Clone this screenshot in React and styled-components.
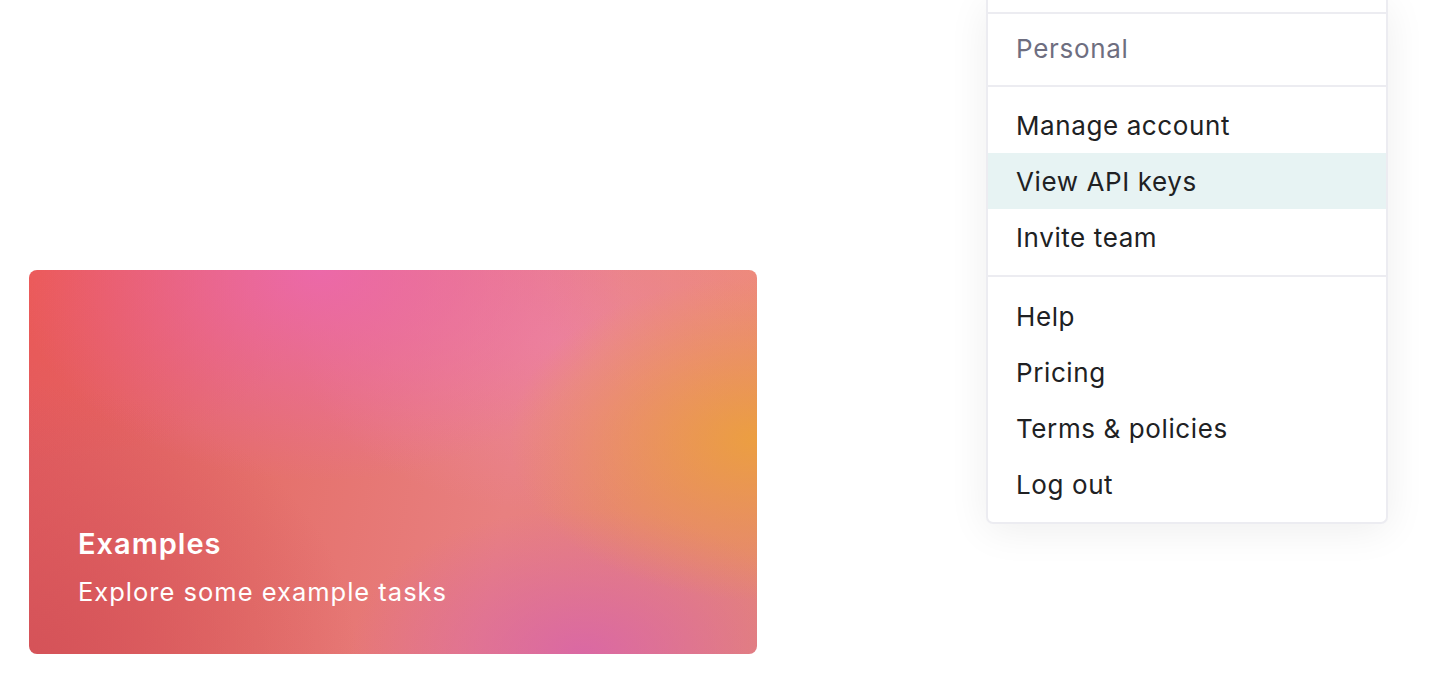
import styled, { createGlobalStyle } from "styled-components";

const GlobalStyle = createGlobalStyle`
  html, body {
    margin: 0;
    padding: 0;
    background: #ffffff;
  }
  body {
    font-family: Inter, "Noto Sans", "Liberation Sans", sans-serif;
    -webkit-font-smoothing: antialiased;
  }
`;

const Page = styled.div`
  display: flex;
  justify-content: space-between;
  align-items: flex-start;
  height: 700px;
  padding: 0 49px 0 29px;
  box-sizing: border-box;
  overflow: hidden;
`;

const Card = styled.a`
  display: flex;
  flex-direction: column;
  justify-content: flex-end;
  width: 728px;
  height: 384px;
  margin-top: 270px;
  padding: 0 49px 46px;
  box-sizing: border-box;
  border-radius: 8px;
  color: #ffffff;
  text-decoration: none;
  background:
    radial-gradient(ellipse 34% 42% at 100% 44%, rgba(236, 160, 62, 0.95), rgba(236, 160, 62, 0) 100%),
    radial-gradient(ellipse 32% 38% at 76% 100%, rgba(216, 100, 170, 0.85), rgba(216, 100, 170, 0) 100%),
    radial-gradient(ellipse 42% 55% at 40% 0%, rgba(236, 104, 172, 0.95), rgba(236, 104, 172, 0) 100%),
    radial-gradient(ellipse 35% 45% at 72% 18%, rgba(238, 134, 165, 0.7), rgba(238, 134, 165, 0) 100%),
    radial-gradient(ellipse 30% 40% at 100% 0%, rgba(240, 140, 120, 0.8), rgba(240, 140, 120, 0) 100%),
    radial-gradient(ellipse 45% 70% at 0% 100%, rgba(212, 82, 88, 0.95), rgba(212, 82, 88, 0) 100%),
    radial-gradient(ellipse 40% 50% at 0% 0%, rgba(236, 90, 86, 0.95), rgba(236, 90, 86, 0) 100%),
    linear-gradient(100deg, #e25a5e 0%, #e5716c 35%, #e88080 65%, #e48478 100%);
`;

const CardTitle = styled.div`
  font-size: 29px;
  font-weight: 600;
  line-height: 36px;
  letter-spacing: 1px;
`;

const CardText = styled.div`
  margin-top: 14px;
  font-size: 25.5px;
  font-weight: 400;
  line-height: 32px;
  letter-spacing: 1px;
`;

const Menu = styled.div`
  width: 402px;
  border: 2px solid #ececf1;
  border-top: none;
  border-radius: 0 0 7px 7px;
  background: #ffffff;
  box-shadow: 0 6px 40px rgba(0, 0, 0, 0.07);
  box-sizing: border-box;
`;

const Section = styled.div`
  padding: ${(p) => p.$pad || "10px 0"};
  border-top: ${(p) => (p.$first ? "none" : "2px solid #ececf1")};
  height: ${(p) => p.$height || "auto"};
  box-sizing: border-box;
`;

const Label = styled.div`
  display: flex;
  align-items: center;
  height: 56px;
  padding: 0 28px;
  font-size: 26px;
  letter-spacing: 0.7px;
  color: #6e6e80;
`;

const Item = styled.div`
  display: flex;
  align-items: center;
  height: 56px;
  padding: 0 28px;
  font-size: 26px;
  letter-spacing: 0.6px;
  color: #202123;
  background: ${(p) => (p.$active ? "#e7f3f3" : "transparent")};
  cursor: pointer;
`;

const accountItems = ["Manage account", "View API keys", "Invite team"];
const helpItems = ["Help", "Pricing", "Terms & policies", "Log out"];

export default function App() {
  return (
    <>
      <GlobalStyle />
      <Page>
        <Card href="#">
          <CardTitle>Examples</CardTitle>
          <CardText>Explore some example tasks</CardText>
        </Card>
        <Menu>
          <Section $first $height="12px" $pad="0" />
          <Section $pad="6px 0 9px">
            <Label>Personal</Label>
          </Section>
          <Section $pad="10px 0 10px">
            {accountItems.map((label) => (
              <Item key={label} $active={label === "View API keys"}>
                {label}
              </Item>
            ))}
          </Section>
          <Section $pad="11px 0 10px">
            {helpItems.map((label) => (
              <Item key={label}>{label}</Item>
            ))}
          </Section>
        </Menu>
      </Page>
    </>
  );
}
